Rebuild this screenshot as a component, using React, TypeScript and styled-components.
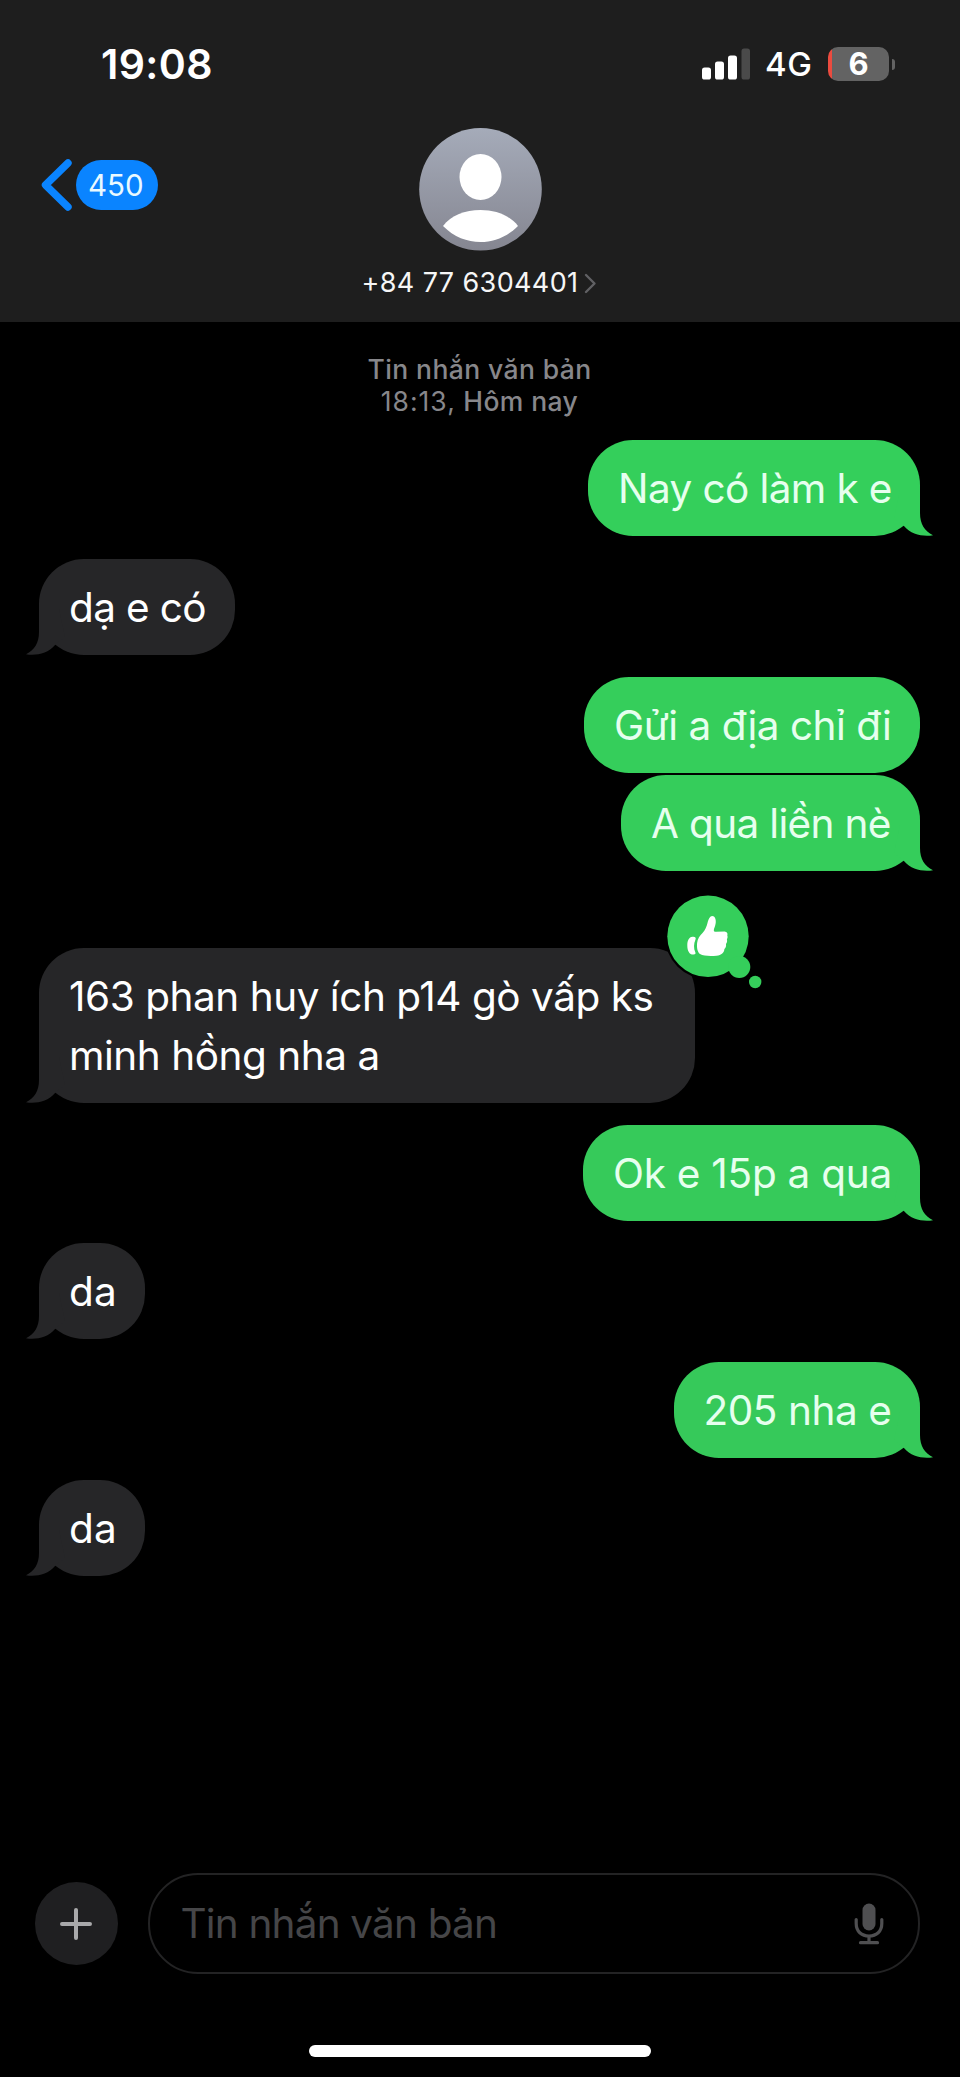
import React from "react";
import styled, { createGlobalStyle, css } from "styled-components";

type Side = "in" | "out";

interface Message {
  id: number;
  side: Side;
  lines: string[];
  width: number;
  gap: number;
  tracking: number;
  tail?: boolean;
  liked?: boolean;
  fill: string;
}

const GREY = "#262628";

const messages: Message[] = [
  { id: 1, side: "out", lines: ["Nay có làm k e"], width: 332, gap: 22, tracking: -0.6, tail: true, fill: "#34cf5b" },
  { id: 2, side: "in", lines: ["dạ e có"], width: 196, gap: 23, tracking: -0.65, tail: true, fill: GREY },
  { id: 3, side: "out", lines: ["Gửi a địa chỉ đi"], width: 336, gap: 22, tracking: -0.48, fill: "#35ce5b" },
  { id: 4, side: "out", lines: ["A qua liền nè"], width: 299, gap: 2, tracking: -0.66, tail: true, fill: "#35cd5b" },
  {
    id: 5,
    side: "in",
    lines: ["163 phan huy ích p14 gò vấp ks", "minh hồng nha a"],
    width: 656,
    gap: 77,
    tracking: -0.46,
    tail: true,
    liked: true,
    fill: GREY,
  },
  { id: 6, side: "out", lines: ["Ok e 15p a qua"], width: 337, gap: 22, tracking: -0.25, tail: true, fill: "#36ca5a" },
  { id: 7, side: "in", lines: ["da"], width: 106, gap: 22, tracking: 0.2, tail: true, fill: GREY },
  { id: 8, side: "out", lines: ["205 nha e"], width: 246.5, gap: 23, tracking: -0.45, tail: true, fill: "#36c95a" },
  { id: 9, side: "in", lines: ["da"], width: 106, gap: 22, tracking: 0.2, tail: true, fill: GREY },
];

const GlobalStyle = createGlobalStyle`
  *, *::before, *::after { box-sizing: border-box; }
  body { margin: 0; background: #000; }
`;

const Screen = styled.div`
  display: flex;
  flex-direction: column;
  width: 960px;
  height: 2077px;
  overflow: hidden;
  background: #000;
  color: #fff;
  font-family: Inter, "Noto Sans", sans-serif;
`;

const Header = styled.header`
  flex: none;
  height: 322px;
  background: #1e1e1e;
`;

const StatusBar = styled.div`
  display: flex;
  align-items: center;
  justify-content: space-between;
  height: 128px;
  padding: 0 65px 0 101px;
`;

const Clock = styled.div`
  font-size: 41px;
  font-weight: 600;
  letter-spacing: 0.4px;
`;

const StatusIcons = styled.div`
  display: flex;
  align-items: center;
`;

const Network = styled.span`
  width: 63px;
  margin-left: 15px;
  font-size: 33px;
  font-weight: 500;
  letter-spacing: 0.7px;
`;

const BatteryBody = styled.div`
  display: flex;
  align-items: center;
  justify-content: center;
  width: 61px;
  height: 34px;
  border-radius: 10px;
  background: linear-gradient(90deg, #eb4b3f 4px, #636363 4px);
  font-size: 31px;
  font-weight: 700;
  line-height: 34px;
`;

const BatteryCap = styled.div`
  width: 3px;
  height: 11px;
  margin-left: 3px;
  border-radius: 0 4px 4px 0;
  background: #636363;
`;

const NavBar = styled.nav`
  display: grid;
  grid-template-columns: 1fr auto 1fr;
  align-items: start;
`;

const Back = styled.div`
  display: flex;
  align-items: center;
  gap: 2px;
  padding: 30px 0 0 40px;
`;

const UnreadBadge = styled.span`
  width: 81.5px;
  height: 50px;
  padding-right: 2px;
  border-radius: 25px;
  background: #0a84ff;
  color: #e9f9ff;
  font-size: 29.5px;
  line-height: 50px;
  text-align: center;
`;

const Contact = styled.div`
  display: flex;
  flex-direction: column;
  align-items: center;
  gap: 15px;
`;

const ContactName = styled.div`
  display: flex;
  align-items: center;
  gap: 6px;
  color: #f6f6f6;
  font-size: 27px;
  line-height: 34px;
  letter-spacing: 0.38px;
`;

const Conversation = styled.main`
  display: flex;
  flex: 1;
  flex-direction: column;
  padding: 31px 40px 0 39px;
`;

const ThreadStamp = styled.div`
  display: flex;
  flex-direction: column;
  align-items: center;
  height: 65px;
  color: #87878b;
  font-size: 26.5px;
  font-weight: 500;
  line-height: 32px;
  letter-spacing: 0.4px;
`;

const StampTime = styled.span`
  font-weight: 400;
  letter-spacing: 1px;
`;

const Row = styled.div<{ $side: Side; $gap: number }>`
  display: flex;
  justify-content: ${(p) => (p.$side === "out" ? "flex-end" : "flex-start")};
  margin-top: ${(p) => p.$gap}px;
`;

const Bubble = styled.div<{ $side: Side; $width: number; $tracking: number; $fill: string }>`
  position: relative;
  width: ${(p) => p.$width}px;
  padding: 19px 0 18px 30px;
  border-radius: 45px;
  background: ${(p) => p.$fill};
  color: ${(p) => (p.$side === "out" ? "#e6ffee" : "#fff")};
  font-size: 40.5px;
  line-height: 59px;
  letter-spacing: ${(p) => p.$tracking}px;
  white-space: nowrap;
`;

const Line = styled.div`
  position: relative;
  z-index: 1;
`;

const TailShape = styled.svg<{ $side: Side }>`
  position: absolute;
  bottom: 0;
  ${(p) =>
    p.$side === "out"
      ? css`
          right: -14px;
        `
      : css`
          left: -14px;
          transform: scaleX(-1);
        `}
`;

const Reaction = styled.svg`
  position: absolute;
  top: -56px;
  right: -70.5px;
`;

const Composer = styled.footer`
  display: flex;
  align-items: center;
  flex: none;
  gap: 30px;
  height: 101px;
  padding: 0 40px 0 34.5px;
`;

const AddButton = styled.div`
  display: flex;
  align-items: center;
  justify-content: center;
  flex: none;
  width: 83.5px;
  height: 83.5px;
  border-radius: 50%;
  background: #1f1f21;
`;

const Field = styled.div`
  display: flex;
  align-items: center;
  justify-content: space-between;
  flex: 1;
  height: 101px;
  padding: 0 34.5px 0 30.5px;
  border: 2.5px solid #232324;
  border-radius: 50px;
`;

const Placeholder = styled.span`
  color: #464648;
  font-size: 40.5px;
  letter-spacing: -0.82px;
`;

const HomeArea = styled.div`
  display: flex;
  align-items: flex-end;
  justify-content: center;
  flex: none;
  height: 103px;
  padding-bottom: 20px;
`;

const HomeIndicator = styled.div`
  width: 342px;
  height: 12px;
  border-radius: 6px;
  background: #fff;
`;

const SignalIcon = () => (
  <svg width="48" height="32" viewBox="0 0 48 32">
    <rect x="0" y="19.5" width="9" height="12" rx="2.6" fill="#fff" />
    <rect x="13" y="13.5" width="9" height="18" rx="2.6" fill="#fff" />
    <rect x="26" y="7.5" width="9" height="24" rx="2.6" fill="#fff" />
    <rect x="39.5" y="0.5" width="8.5" height="31" rx="2.6" fill="#4a4a4a" />
  </svg>
);

const BackIcon = () => (
  <svg width="34" height="54" viewBox="0 0 34 54" fill="none">
    <path d="M28 5 L5.5 27 L28 49" stroke="#0a84ff" strokeWidth="7.4" strokeLinecap="round" strokeLinejoin="round" />
  </svg>
);

const DetailIcon = () => (
  <svg width="14" height="22" viewBox="0 0 14 22" fill="none">
    <path d="M2 3 L10.5 11.5 L2 20" stroke="#606063" strokeWidth="2.4" strokeLinecap="round" strokeLinejoin="round" />
  </svg>
);

const Avatar = () => (
  <svg width="123" height="123" viewBox="0 0 123 123">
    <defs>
      <linearGradient id="avatar" x1="0" y1="0" x2="0" y2="1">
        <stop offset="0" stopColor="#a5abb9" />
        <stop offset="1" stopColor="#858691" />
      </linearGradient>
    </defs>
    <circle cx="61.5" cy="61.3" r="61.3" fill="url(#avatar)" />
    <ellipse cx="61.5" cy="49" rx="21" ry="23" fill="#fff" />
    <path d="M24 98 C32 87.5 46 82 61.5 82 C77 82 91 87.5 99 98 C88 109 75 114 61.5 114 C48 114 35 109 24 98 Z" fill="#fff" />
  </svg>
);

const Tail = ({ side, fill }: { side: Side; fill: string }) => (
  <TailShape $side={side} width="54" height="46" viewBox="0 0 54 46">
    <path d="M40 0 V23 C40 34 44.5 41 53 45.3 C43 47 31 44.5 24.2 36.3 L14 28 L20 0 Z" fill={fill} />
  </TailShape>
);

const LikeReaction = () => (
  <Reaction width="110" height="110" viewBox="0 0 110 110">
    <circle cx="52" cy="44.3" r="43" fill="#000" />
    <circle cx="52" cy="44.3" r="40.7" fill="#35ce5b" />
    <circle cx="83.3" cy="75" r="11" fill="#35ce5b" />
    <circle cx="99.2" cy="90" r="6.2" fill="#35ce5b" />
    <path
      d="M36.5 44.8 C32.8 45.3 31.3 48.5 31.3 53.5 C31.3 59 33.5 62.8 37.5 62.6 C39.5 62.5 40 61.5 39.2 60 C37.6 56.5 37.6 51.5 39.5 47.5 C40.3 45.5 39 44.5 36.5 44.8 Z"
      fill="#fff"
    />
    <path
      d="M51.5 31 C52.5 27 54 24 56.2 24 C59 24 60.2 27.5 59.7 31 C59.3 34 57.9 36.8 57.8 38 C57.7 39.4 58.5 39.8 60 39.8 L68.5 39.6 C71 39.8 72 41.5 71.3 43.6 C71.8 44.8 71.7 46 70.9 47.3 C71.3 49 71.2 50.5 70 52 C70.3 54 69.9 55.6 68.4 57 C68.3 60.5 65.5 63.3 60.5 63.7 C54 64.3 47.5 64 44 62 C41.3 60 40.7 55.5 41.1 51 C41.5 46.5 44 43.8 46.5 41 C49.3 37.8 50.5 35 51.5 31 Z"
      fill="#fff"
    />
  </Reaction>
);

const PlusIcon = () => (
  <svg width="34" height="34" viewBox="0 0 34 34">
    <path d="M17 3 V31 M3 17 H31" stroke="#a9a9ab" strokeWidth="4" strokeLinecap="round" />
  </svg>
);

const MicIcon = () => (
  <svg width="30" height="42" viewBox="0 0 30 42" fill="none">
    <rect x="8.5" y="0.5" width="13" height="27" rx="6.5" fill="#4f4f51" />
    <path
      d="M2.2 16.5 V20.5 C2.2 28.5 7.5 33 15 33 S27.8 28.5 27.8 20.5 V16.5 M15 33 V39.5 M6.5 39.7 H23.5"
      stroke="#4f4f51"
      strokeWidth="3.2"
      strokeLinecap="round"
    />
  </svg>
);

export default function App() {
  return (
    <Screen>
      <GlobalStyle />
      <Header>
        <StatusBar>
          <Clock>19:08</Clock>
          <StatusIcons>
            <SignalIcon />
            <Network>4G</Network>
            <BatteryBody>6</BatteryBody>
            <BatteryCap />
          </StatusIcons>
        </StatusBar>
        <NavBar>
          <Back>
            <BackIcon />
            <UnreadBadge>450</UnreadBadge>
          </Back>
          <Contact>
            <Avatar />
            <ContactName>
              +84 77 6304401
              <DetailIcon />
            </ContactName>
          </Contact>
        </NavBar>
      </Header>

      <Conversation>
        <ThreadStamp>
          <span>Tin nhắn văn bản</span>
          <span>
            <StampTime>18:13,</StampTime> Hôm nay
          </span>
        </ThreadStamp>
        {messages.map((m) => (
          <Row key={m.id} $side={m.side} $gap={m.gap}>
            <Bubble $side={m.side} $width={m.width} $tracking={m.tracking} $fill={m.fill}>
              {m.tail && <Tail side={m.side} fill={m.fill} />}
              {m.lines.map((line) => (
                <Line key={line}>{line}</Line>
              ))}
              {m.liked && <LikeReaction />}
            </Bubble>
          </Row>
        ))}
      </Conversation>

      <Composer>
        <AddButton>
          <PlusIcon />
        </AddButton>
        <Field>
          <Placeholder>Tin nhắn văn bản</Placeholder>
          <MicIcon />
        </Field>
      </Composer>
      <HomeArea>
        <HomeIndicator />
      </HomeArea>
    </Screen>
  );
}
